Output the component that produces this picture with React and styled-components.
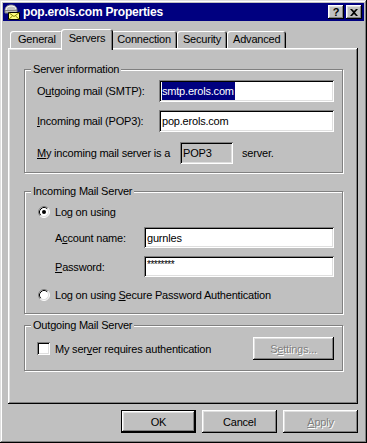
import React from 'react';
import styled, { createGlobalStyle, css } from 'styled-components';

const GlobalStyle = createGlobalStyle`
  html, body {
    margin: 0;
    padding: 0;
    background: #c0c0c0;
  }
  body {
    font-family: 'Liberation Sans', Arial, sans-serif;
    font-size: 11px;
    letter-spacing: -0.2px;
    color: #000;
  }
`;

// win98 bevels
const raised = css`
  box-shadow: inset -1px -1px #000, inset 1px 1px #dfdfdf,
    inset -2px -2px #808080, inset 2px 2px #fff;
`;
const buttonBevel = css`
  box-shadow: inset -1px -1px #000, inset 1px 1px #fff,
    inset -2px -2px #808080, inset 2px 2px #dfdfdf;
`;
const sunken = css`
  box-shadow: inset 1px 1px #808080, inset -1px -1px #fff,
    inset 2px 2px #000, inset -2px -2px #dfdfdf;
`;

const Window = styled.div`
  width: 367px;
  height: 443px;
  box-sizing: border-box;
  padding: 3px;
  background: #c0c0c0;
  display: flex;
  flex-direction: column;
  ${raised}
`;

const TitleBar = styled.div`
  height: 18px;
  background: #000080;
  color: #fff;
  display: flex;
  align-items: center;
  padding: 0 2px 0 1px;
  gap: 3px;
`;

const TitleText = styled.span`
  flex: 1;
  font-weight: bold;
  font-size: 12px;
  letter-spacing: -0.2px;
`;

const CaptionButton = styled.div`
  width: 16px;
  height: 14px;
  box-sizing: border-box;
  background: #c0c0c0;
  color: #000;
  display: flex;
  align-items: center;
  justify-content: center;
  font-weight: bold;
  font-size: 11px;
  margin-left: ${p => p.$gap || 0}px;
  ${buttonBevel}
`;

const Body = styled.div`
  flex: 1;
  display: flex;
  flex-direction: column;
  padding: 8px 6px 0 5px;
`;

const TabRow = styled.div`
  display: flex;
  align-items: flex-end;
  height: 21px;
  padding-left: 2px;
  margin-bottom: -2px;
  position: relative;
  z-index: 1;
`;

const Tab = styled.div`
  box-sizing: border-box;
  height: ${p => (p.$active ? 21 : 17)}px;
  margin: ${p => (p.$active ? '0 -2px' : '0 0 2px')};
  padding: ${p => (p.$active ? '0 8px 3px' : p.$first ? '0 7px 1px 8px' : '0 6px 1px')};
  display: flex;
  align-items: center;
  background: #c0c0c0;
  border-radius: 3px 3px 0 0;
  position: relative;
  z-index: ${p => (p.$active ? 2 : 1)};
  box-shadow: inset 1px 1px #fff, inset -1px 0 #000, inset -2px 0 #808080;
`;

const Panel = styled.div`
  height: 356px;
  box-sizing: border-box;
  padding: 15px 15px 0 16px;
  display: flex;
  flex-direction: column;
  box-shadow: inset -1px -1px #000, inset 1px 1px #fff,
    inset -2px -2px #808080, inset 2px 2px #dfdfdf;
`;

const Group = styled.fieldset`
  margin: ${p => p.$mt || 0}px 0 0;
  padding: ${p => p.$pad};
  border: 1px solid #808080;
  box-shadow: inset 1px 1px #fff, 1px 1px #fff;
  min-width: 0;
`;

const Legend = styled.legend`
  padding: 0 2px;
  margin-left: -6px;
  line-height: 13px;
  background: #c0c0c0;
`;

const Row = styled.div`
  display: flex;
  align-items: center;
  justify-content: ${p => p.$justify || 'flex-start'};
  margin-top: ${p => p.$mt || 0}px;
  padding-left: ${p => p.$indent || 0}px;
  height: ${p => (p.$h ? `${p.$h}px` : 'auto')};
`;

const Label = styled.span`
  width: ${p => p.$w}px;
  flex-shrink: 0;
  white-space: nowrap;
`;

const Field = styled.div`
  box-sizing: border-box;
  flex: ${p => (p.$w ? 'none' : 1)};
  width: ${p => (p.$w ? `${p.$w}px` : 'auto')};
  height: ${p => p.$h || 22}px;
  padding: 0 3px;
  display: flex;
  align-items: ${p => p.$top ? 'flex-start' : 'center'};
  background: ${p => (p.$disabled ? '#c0c0c0' : '#fff')};
  white-space: nowrap;
  overflow: hidden;
  ${sunken}
`;

const Selected = styled.span`
  display: inline-block;
  line-height: 18px;
  background: #000080;
  color: #fff;
  padding-right: 1px;
`;

const Stars = styled.span`
  padding-top: 3px;
  font-size: 10px;
  letter-spacing: -0.5px;
`;

const After = styled.span`
  margin-left: 9px;
`;

const Choice = styled.label`
  display: flex;
  align-items: center;
  gap: 5px;
  margin-left: ${p => p.$ml || 0}px;
  white-space: nowrap;
`;

const CheckBox = styled.span`
  width: 13px;
  height: 13px;
  box-sizing: border-box;
  background: #fff;
  ${sunken}
`;

const Button = styled.div`
  box-sizing: border-box;
  width: ${p => p.$w || 75}px;
  height: 23px;
  display: flex;
  align-items: center;
  justify-content: center;
  background: #c0c0c0;
  color: ${p => (p.$disabled ? '#808080' : '#000')};
  text-shadow: ${p => (p.$disabled ? '1px 1px #fff' : 'none')};
  border: ${p => (p.$default ? '1px solid #000' : 'none')};
  ${buttonBevel}
`;

const ButtonRow = styled.div`
  display: flex;
  justify-content: flex-end;
  gap: 6px;
  margin-top: 6px;
`;

const MailIcon = () => (
  <svg width="16" height="16" viewBox="0 0 16 16">
    <path d="M1 7 C1 3 3 1 7 1 C11 1 13 3 13 7 L13 9 L1 9 Z" fill="#c0c0c0" stroke="#808080" />
    <path d="M2 6 C2 3.5 4 2 7 2 C10 2 11.5 3 12 5" fill="none" stroke="#fff" />
    <rect x="1" y="6" width="12" height="1" fill="#808080" />
    <rect x="4.5" y="8.5" width="11" height="7" fill="#ffff80" stroke="#000" />
    <path d="M4.5 8.5 L10 12.5 L15.5 8.5 M4.5 15.5 L8.5 12 M15.5 15.5 L11.5 12" fill="none" stroke="#808000" />
  </svg>
);

const CloseGlyph = () => (
  <svg width="8" height="7" viewBox="0 0 8 7">
    <path d="M0 0h2l2 2 2-2h2L5 3.5 8 7H6L4 5 2 7H0l3-3.5z" fill="#000" />
  </svg>
);

const Radio = ({ checked }) => (
  <svg width="12" height="12" viewBox="0 0 12 12">
    <circle cx="6" cy="6" r="5" fill="#fff" />
    <path d="M2.11 9.89 A5.5 5.5 0 0 1 9.89 2.11" fill="none" stroke="#808080" />
    <path d="M9.89 2.11 A5.5 5.5 0 0 1 2.11 9.89" fill="none" stroke="#fff" />
    <path d="M2.82 9.18 A4.5 4.5 0 0 1 9.18 2.82" fill="none" stroke="#000" />
    <path d="M9.18 2.82 A4.5 4.5 0 0 1 2.82 9.18" fill="none" stroke="#dfdfdf" />
    {checked && <circle cx="6" cy="6" r="2" fill="#000" />}
  </svg>
);

const tabs = ['General', 'Servers', 'Connection', 'Security', 'Advanced'];

export default function App() {
  return (
    <>
      <GlobalStyle />
      <Window>
        <TitleBar>
          <MailIcon />
          <TitleText>pop.erols.com Properties</TitleText>
          <CaptionButton>?</CaptionButton>
          <CaptionButton $gap={-1}>
            <CloseGlyph />
          </CaptionButton>
        </TitleBar>

        <Body>
          <TabRow>
            {tabs.map((t, i) => (
              <Tab key={t} $first={i === 0} $active={t === 'Servers'}>{t}</Tab>
            ))}
          </TabRow>

          <Panel>
            <Group $pad="4px 8px 8px 12px">
              <Legend>Server information</Legend>
              <Row>
                <Label $w={122}>O<u>u</u>tgoing mail (SMTP):</Label>
                <Field><Selected>smtp.erols.com</Selected></Field>
              </Row>
              <Row $mt={8}>
                <Label $w={122}><u>I</u>ncoming mail (POP3):</Label>
                <Field>pop.erols.com</Field>
              </Row>
              <Row $mt={10}>
                <Label $w={143}><u>M</u>y incoming mail server is a</Label>
                <Field $w={53} $disabled>POP3</Field>
                <After>server.</After>
              </Row>
            </Group>

            <Group $mt={12} $pad="6px 8px 10px 12px">
              <Legend>Incoming Mail Server</Legend>
              <Row $h={16}>
                <Choice $ml={1}>
                  <Radio checked />
                  <span>Lo<u>g</u> on using</span>
                </Choice>
              </Row>
              <Row $mt={7} $indent={18}>
                <Label $w={89}>A<u>c</u>count name:</Label>
                <Field $h={21}>gurnles</Field>
              </Row>
              <Row $mt={8} $indent={18}>
                <Label $w={89}><u>P</u>assword:</Label>
                <Field $h={21} $top><Stars>********</Stars></Field>
              </Row>
              <Row $mt={10} $h={16}>
                <Choice $ml={1}>
                  <Radio />
                  <span>Log on using <u>S</u>ecure Password Authentication</span>
                </Choice>
              </Row>
            </Group>

            <Group $mt={5} $pad="5px 8px 10px 12px">
              <Legend>Outgoing Mail Server</Legend>
              <Row $justify="space-between">
                <Choice>
                  <CheckBox />
                  <span>My ser<u>v</u>er requires authentication</span>
                </Choice>
                <Button $w={81} $disabled>S<u>e</u>ttings...</Button>
              </Row>
            </Group>
          </Panel>

          <ButtonRow>
            <Button $default>OK</Button>
            <Button>Cancel</Button>
            <Button $disabled><u>A</u>pply</Button>
          </ButtonRow>
        </Body>
      </Window>
    </>
  );
}
